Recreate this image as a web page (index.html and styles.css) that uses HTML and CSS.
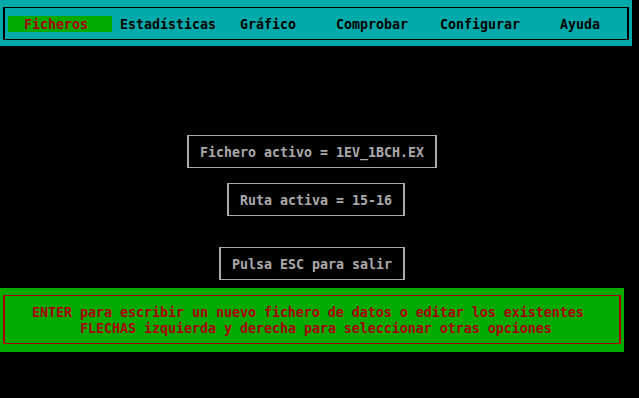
FILE: index.html
```html
<!DOCTYPE html>
<html lang="es">
<head>
<meta charset="utf-8">
<title>Ficheros</title>
<link rel="stylesheet" href="styles.css">
</head>
<body>
<header class="menubar">
  <nav class="menu-frame">
    <span class="menu-item active">Ficheros</span>
    <span class="menu-item">Estadísticas</span>
    <span class="menu-item">Gráfico</span>
    <span class="menu-item">Comprobar</span>
    <span class="menu-item">Configurar</span>
    <span class="menu-item">Ayuda</span>
  </nav>
</header>
<main class="screen">
  <div class="info-box box-file">Fichero activo = 1EV_1BCH.EX</div>
  <div class="info-box box-route">Ruta activa = 15-16</div>
  <div class="info-box box-exit">Pulsa ESC para salir</div>
</main>
<footer class="help-panel">
  <div class="help-frame">
    <div class="help-line line-enter">ENTER para escribir un nuevo fichero de datos o editar los existentes</div>
    <div class="help-line line-arrows">FLECHAS izquierda y derecha para seleccionar otras opciones</div>
  </div>
</footer>
</body>
</html>
```

FILE: styles.css
```css
* { box-sizing: border-box; }

html, body {
  margin: 0;
  padding: 0;
  background: #000;
}

body {
  width: 639px;
  height: 398px;
  overflow: hidden;
  font-family: "DejaVu Sans Mono", "Liberation Mono", monospace;
  font-size: 13.29px;
  font-weight: bold;
  line-height: 16px;
}

.menubar {
  width: 632px;
  height: 46px;
  background: #00aaaa;
  padding: 7px 0 0 3px;
}

.menu-frame {
  width: 626px;
  height: 33px;
  border-top: 1px solid #000;
  border-bottom: 1px solid #000;
  border-left: 2px solid #000;
  border-right: 2px solid #000;
  padding: 8px 0 7px 3px;
  display: grid;
  grid-template-columns: 112px 120px 96px 104px 120px auto;
  color: #000;
}

.menu-item {
  height: 16px;
  padding-top: 1px;
  line-height: 15px;
  white-space: nowrap;
}

.menu-item.active {
  width: 104px;
  background: #00aa00;
  color: #aa0000;
  padding-left: 16px;
}

.screen {
  height: 242px;
  padding-top: 89px;
  display: flex;
  flex-direction: column;
  align-items: flex-start;
}

.info-box {
  color: #aaaaaa;
  border-top: 1px solid #aaaaaa;
  border-bottom: 1px solid #aaaaaa;
  border-left: 2px solid #aaaaaa;
  border-right: 2px solid #aaaaaa;
  padding: 9px 11px 6px 11px;
  height: 33px;
  white-space: nowrap;
}

.box-file { margin-left: 187px; }
.box-route { margin-left: 227px; margin-top: 15px; }
.box-exit { margin-left: 219px; margin-top: 31px; }

.help-panel {
  width: 624px;
  height: 64px;
  background: #00aa00;
  padding: 7px 0 0 3px;
}

.help-frame {
  width: 618px;
  height: 49px;
  border-top: 1px solid #aa0000;
  border-bottom: 1px solid #aa0000;
  border-left: 2px solid #aa0000;
  border-right: 2px solid #aa0000;
  padding: 9px 0 6px 0;
  color: #aa0000;
}

.help-line {
  height: 16px;
  white-space: nowrap;
}
.line-enter { padding-left: 27px; }
.line-arrows { padding-left: 75px; }
```
